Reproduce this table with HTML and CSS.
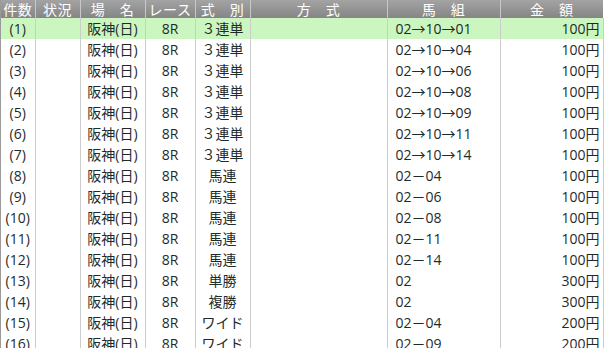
FILE: index.html
```html
<!DOCTYPE html>
<html lang="ja">
<head>
<meta charset="utf-8">
<link rel="stylesheet" href="styles.css">
</head>
<body>
<div class="frame">
<table class="grid">
<colgroup>
<col class="c1"><col class="c2"><col class="c3"><col class="c4"><col class="c5"><col class="c6"><col class="c7"><col class="c8">
</colgroup>
<thead>
<tr><th>件数</th><th>状況</th><th>場　名</th><th>レース</th><th>式　別</th><th>方　式</th><th>馬　組</th><th>金　額</th></tr>
</thead>
<tbody>
<tr class="sel"><td class="n">(1)</td><td></td><td class="c">阪神(日)</td><td class="c">8R</td><td class="c">３連単</td><td></td><td class="l">02→10→01</td><td class="r">100円</td></tr>
<tr><td class="n">(2)</td><td></td><td class="c">阪神(日)</td><td class="c">8R</td><td class="c">３連単</td><td></td><td class="l">02→10→04</td><td class="r">100円</td></tr>
<tr><td class="n">(3)</td><td></td><td class="c">阪神(日)</td><td class="c">8R</td><td class="c">３連単</td><td></td><td class="l">02→10→06</td><td class="r">100円</td></tr>
<tr><td class="n">(4)</td><td></td><td class="c">阪神(日)</td><td class="c">8R</td><td class="c">３連単</td><td></td><td class="l">02→10→08</td><td class="r">100円</td></tr>
<tr><td class="n">(5)</td><td></td><td class="c">阪神(日)</td><td class="c">8R</td><td class="c">３連単</td><td></td><td class="l">02→10→09</td><td class="r">100円</td></tr>
<tr><td class="n">(6)</td><td></td><td class="c">阪神(日)</td><td class="c">8R</td><td class="c">３連単</td><td></td><td class="l">02→10→11</td><td class="r">100円</td></tr>
<tr><td class="n">(7)</td><td></td><td class="c">阪神(日)</td><td class="c">8R</td><td class="c">３連単</td><td></td><td class="l">02→10→14</td><td class="r">100円</td></tr>
<tr><td class="n">(8)</td><td></td><td class="c">阪神(日)</td><td class="c">8R</td><td class="c">馬連</td><td></td><td class="l">02－04</td><td class="r">100円</td></tr>
<tr><td class="n">(9)</td><td></td><td class="c">阪神(日)</td><td class="c">8R</td><td class="c">馬連</td><td></td><td class="l">02－06</td><td class="r">100円</td></tr>
<tr><td class="n">(10)</td><td></td><td class="c">阪神(日)</td><td class="c">8R</td><td class="c">馬連</td><td></td><td class="l">02－08</td><td class="r">100円</td></tr>
<tr><td class="n">(11)</td><td></td><td class="c">阪神(日)</td><td class="c">8R</td><td class="c">馬連</td><td></td><td class="l">02－11</td><td class="r">100円</td></tr>
<tr><td class="n">(12)</td><td></td><td class="c">阪神(日)</td><td class="c">8R</td><td class="c">馬連</td><td></td><td class="l">02－14</td><td class="r">100円</td></tr>
<tr><td class="n">(13)</td><td></td><td class="c">阪神(日)</td><td class="c">8R</td><td class="c">単勝</td><td></td><td class="l">02</td><td class="r">300円</td></tr>
<tr><td class="n">(14)</td><td></td><td class="c">阪神(日)</td><td class="c">8R</td><td class="c">複勝</td><td></td><td class="l">02</td><td class="r">300円</td></tr>
<tr><td class="n">(15)</td><td></td><td class="c">阪神(日)</td><td class="c">8R</td><td class="c">ワイド</td><td></td><td class="l">02－04</td><td class="r">200円</td></tr>
<tr><td class="n">(16)</td><td></td><td class="c">阪神(日)</td><td class="c">8R</td><td class="c">ワイド</td><td></td><td class="l">02－09</td><td class="r">200円</td></tr>
</tbody>
</table>
<div class="edge"></div>
</div>
</body>
</html>
```
FILE: styles.css
```css
html, body {
  margin: 0;
  padding: 0;
  background: #ffffff;
  overflow: hidden;
}
body {
  width: 608px;
  height: 348px;
  font-family: "Open Sans", "Noto Sans CJK JP", sans-serif;
  font-size: 14px;
  color: #1e2b2b;
}
.frame {
  display: flex;
  width: 608px;
  height: 348px;
  border-left: 1px solid #9a9a9a;
  box-sizing: border-box;
  overflow: hidden;
}
.grid {
  border-collapse: collapse;
  table-layout: fixed;
  width: 602px;
  flex: none;
}
.c1 { width: 34px; }
.c2 { width: 45px; }
.c3 { width: 65px; }
.c4 { width: 50px; }
.c5 { width: 55px; }
.c6 { width: 137px; }
.c7 { width: 113px; }
.c8 { width: 103px; }
.grid th {
  height: 18px;
  padding: 0;
  font-weight: normal;
  color: #ffffff;
  background: linear-gradient(#a3a3a3, #858585);
  border-right: 1px solid #c8c8c8;
  line-height: 18px;
  white-space: nowrap;
  text-align: center;
  letter-spacing: 0.5px;
  font-family: "Noto Sans CJK JP", sans-serif;
}
.grid th:last-child { border-right: none; }
.grid td {
  height: 21px;
  padding: 0;
  line-height: 21px;
  border-right: 1px solid #cccccc;
  white-space: nowrap;
  overflow: hidden;
}
.grid .sel td { background: #ccf6c0; }
.n { text-align: center; }
.c { text-align: center; }
.l { text-align: left; padding-left: 8px !important; }
.r { text-align: right; padding-right: 3px !important; }
.edge {
  flex: 1;
  background: #ffffff;
}
```
